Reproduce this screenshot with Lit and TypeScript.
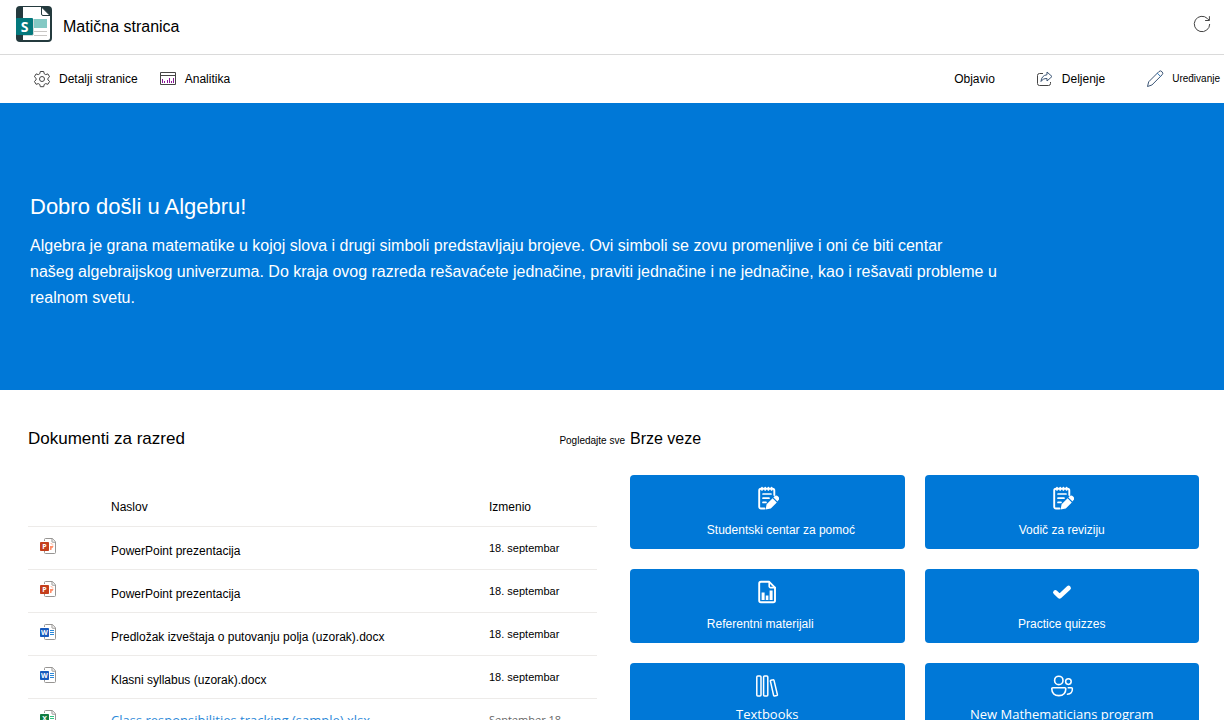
import { LitElement, html, css, svg } from "lit";
import { customElement } from "lit/decorators.js";
import { classMap } from "lit/directives/class-map.js";

type DocKind = "ppt" | "doc" | "xls";

interface ClassDocument {
  kind: DocKind;
  title: string;
  modified: string;
  link?: boolean;
}

interface QuickLink {
  icon: string;
  label: string;
  start?: boolean;
  humanist?: boolean;
}

const documents: ClassDocument[] = [
  { kind: "ppt", title: "PowerPoint prezentacija", modified: "18. septembar" },
  { kind: "ppt", title: "PowerPoint prezentacija", modified: "18. septembar" },
  { kind: "doc", title: "Predložak izveštaja o putovanju polja (uzorak).docx", modified: "18. septembar" },
  { kind: "doc", title: "Klasni syllabus (uzorak).docx", modified: "18. septembar" },
  { kind: "xls", title: "Class responsibilities tracking (sample).xlsx", modified: "September 18", link: true },
];

const quickLinks: QuickLink[] = [
  { icon: "note", label: "Studentski centar za pomoć", start: true },
  { icon: "note", label: "Vodič za reviziju" },
  { icon: "report", label: "Referentni materijali", start: true },
  { icon: "check", label: "Practice quizzes" },
  { icon: "books", label: "Textbooks", humanist: true },
  { icon: "people", label: "New Mathematicians program", humanist: true },
];

const tileShapes: Record<string, unknown> = {
  note: svg`
    <path d="M9.500 22.500H6a1.800 1.800 0 0 1-1.800-1.800V4.600A1.800 1.800 0 0 1 6 2.800h11.500a1.800 1.800 0 0 1 1.800 1.800V9" stroke-width="1.900"/>
    <path d="M7 1.500v2.500M10.200 1.500v2.500M13.400 1.500v2.500M16.600 1.500v2.500" stroke-width="1.700"/>
    <path d="M8 8h8M8 12.200h6M8 16.400h3" stroke-width="1.700"/>
    <path class="solid" d="M10.600 23.400l1-5.200 6-6 4.200 4.200-6 6zM18.400 11.400l.8-.8a2.600 2.600 0 0 1 3.900 0 2.600 2.600 0 0 1 0 3.900l-.6.900z"/>`,
  report: svg`
    <path d="M14.200 1.800H6A1.800 1.800 0 0 0 4.200 3.600v16.800A1.800 1.800 0 0 0 6 22.200h12.200a1.800 1.800 0 0 0 1.800-1.800V7.600z" stroke-width="1.900"/>
    <path d="M14.200 2v4.300a1.300 1.300 0 0 0 1.300 1.300H20" stroke-width="1.600"/>
    <path class="solid" d="M6.600 12.500h3V20h-3zM10.800 15.500h2.600V20h-2.600zM14.600 10.500h3V20h-3z"/>`,
  check: svg`<path d="M5.400 12.400l4.200 4L18.600 8" stroke-width="4.600"/>`,
  books: svg`
    <rect x="1.800" y="2" width="4.200" height="20" rx="1" stroke-width="1.500"/>
    <rect x="8.600" y="2" width="4.200" height="20" rx="1" stroke-width="1.500"/>
    <path d="M16 6.200l2-.4a.8.800 0 0 1 1 .6l3.400 14.200a.8.800 0 0 1-.6 1l-2.200.4a.8.800 0 0 1-1-.6L15.400 7.200a.8.800 0 0 1 .6-1z" stroke-width="1.500"/>`,
  people: svg`
    <circle cx="8.800" cy="6.400" r="4.200" stroke-width="1.600"/>
    <circle cx="18.400" cy="7.600" r="2.800" stroke-width="1.500"/>
    <path d="M2.800 13.800h12a1 1 0 0 1 1 1c0 4.600-2.800 6.800-7 6.800s-7-2.200-7-6.800a1 1 0 0 1 1-1z" stroke-width="1.600"/>
    <path d="M18.200 13.800h3.200a1 1 0 0 1 1 1c0 3.600-1.800 5.400-5 5.400" stroke-width="1.500"/>`,
};

const docColors: Record<DocKind, { badge: string; accent: string; letter: string }> = {
  ppt: { badge: "#c43e1c", accent: "#ff8f6b", letter: "P" },
  doc: { badge: "#185abd", accent: "#2b88d8", letter: "W" },
  xls: { badge: "#107c41", accent: "#33c481", letter: "X" },
};

const docIcon = (kind: DocKind) => {
  const c = docColors[kind];
  return html`<svg class="doc-icon" viewBox="0 0 16 16" aria-hidden="true">
    <path d="M4.500 3V1.500a1 1 0 0 1 1-1h6.800l3.200 3.200v10.800a1 1 0 0 1-1 1h-9a1 1 0 0 1-1-1V13" fill="#fff" stroke="#979593"/>
    <path d="M12 .5v3.200a.5.500 0 0 0 .5.500h3" fill="none" stroke="#979593"/>
    ${kind === "ppt"
      ? svg`<path d="M10 8h3.500a3 3 0 0 1-2 2.500V12H10z" fill="${c.accent}"/><path d="M10.500 5.500h1.500V7h1.500" fill="none" stroke="#ffc7b5"/>`
      : svg`<path d="M10 6.500h4M10 8.500h4M10 10.500h4" fill="none" stroke="${c.accent}"/>`}
    <rect y="4" width="9" height="9" rx=".8" fill="${c.badge}"/>
    <text x="4.500" y="11" text-anchor="middle" font-size="7" font-weight="700" fill="#fff">${c.letter}</text>
  </svg>`;
};

@customElement("app-root")
export class AppRoot extends LitElement {
  static styles = css`
    :host {
      display: block;
      height: 100vh;
      overflow: hidden auto;
      scrollbar-width: none;
      background: #fff;
      color: #000;
      font: 12px/16px "Liberation Sans", Arial, sans-serif;
    }
    *, *::before, *::after { box-sizing: border-box; }
    h1, h2, p { margin: 0; font-weight: 400; }
    a { color: inherit; text-decoration: none; }
    button {
      display: flex;
      align-items: center;
      gap: 8px;
      padding: 0;
      border: 0;
      background: none;
      color: inherit;
      font: inherit;
      cursor: pointer;
    }
    svg { display: block; flex: none; }
    .top {
      display: flex;
      align-items: center;
      justify-content: space-between;
      padding: 6px 13px 12px 16px;
      border-bottom: 1px solid #dadada;
    }
    .brand { display: flex; align-items: center; gap: 11px; }
    .brand h1 { font-size: 16px; line-height: 20px; padding-top: 6px; }
    .logo { width: 36px; height: 36px; }
    .logo text { font: 700 14px "Open Sans", sans-serif; }
    .icon { width: 18px; height: 18px; fill: none; stroke: #444; }
    .commands {
      display: flex;
      align-items: center;
      justify-content: space-between;
      height: 48px;
      padding: 0 4px 0 33px;
    }
    .group { display: flex; align-items: center; gap: 21px; }
    .group.end { gap: 41px; }
    .small { font-size: 10px; }
    .hero {
      padding: 90px 30px 79px;
      background: #0078d7;
      color: #fff;
    }
    .hero h2 { font-size: 22px; line-height: 28px; }
    .hero p { margin-top: 12px; font-size: 16px; line-height: 26px; max-width: 1000px; }
    .content {
      display: grid;
      grid-template-columns: 602fr 569fr;
      padding: 37px 25px 20px 28px;
    }
    .section-head {
      display: flex;
      align-items: center;
      justify-content: space-between;
      height: 24px;
      padding-right: 5px;
    }
    .section-head h2 { font-size: 17px; }
    .section-head a { padding-top: 4px; }
    .links .section-head h2 { font-size: 16px; }
    .table-box { padding: 35px 33px 0 0; }
    table { width: 100%; border-collapse: collapse; table-layout: fixed; }
    th, td { padding: 0; text-align: left; font-weight: 400; border-bottom: 1px solid #edebe9; }
    th { height: 40px; padding-top: 2px; }
    td { height: 43px; }
    .col-icon { width: 83px; }
    .col-date { width: 108px; }
    .name { padding-top: 6px; }
    .date { font-size: 11px; }
    .foreign { font-family: "Open Sans", "Noto Sans", sans-serif; }
    .name.foreign { padding-top: 0; color: #2b88d8; font-size: 13px; }
    .date.foreign { color: #666; }
    .doc-icon { width: 16px; height: 16px; margin: 0 0 3px 12px; }
    .doc-icon text { font-family: "Open Sans", sans-serif; }
    .tiles {
      display: grid;
      grid-template-columns: 1fr 1fr;
      gap: 20px;
      padding-top: 24px;
    }
    .tile {
      display: flex;
      flex-direction: column;
      align-items: center;
      gap: 12px;
      height: 74px;
      padding-top: 11px;
      border-radius: 4px;
      background: #0078d7;
      color: #fff;
    }
    .tile svg {
      width: 24px;
      height: 24px;
      fill: none;
      stroke: #fff;
      stroke-linecap: round;
      stroke-linejoin: round;
    }
    .tile .solid { fill: #fff; stroke: none; }
    .tile.start span { align-self: flex-start; padding-left: 28%; }
    .tile.humanist { gap: 8px; font-family: "Open Sans", "Noto Sans", sans-serif; font-size: 13px; }
  `;

  render() {
    return html`
      <header class="top">
        <div class="brand">
          <svg class="logo" viewBox="0 0 36 36" aria-hidden="true">
            <rect width="36" height="36" rx="4" fill="#243a3e"/>
            <path d="M7 1h18l9 9v22a2 2 0 0 1-2 2H7z" fill="#fff"/>
            <path d="M25.500 1v7a1.500 1.500 0 0 0 1.500 1.500h7z" fill="#fff" stroke="#243a3e"/>
            <path d="M17 13h14v9H17z" fill="#83c9c4"/>
            <path d="M18 25.500h13M18 29.500h13" stroke="#c8c6c4"/>
            <path d="M7 29h11V13h-1v17H7z" fill="#cfd8d8"/>
            <rect y="12" width="17" height="17" rx="1" fill="#03787c"/>
            <text x="8.500" y="25.500" text-anchor="middle" fill="#fff">S</text>
          </svg>
          <h1>Matična stranica</h1>
        </div>
        <button aria-label="Osveži">
          <svg class="icon" viewBox="0 0 18 18"><path d="M16.700 9A7.700 7.700 0 1 1 14.500 3.600L16.200 5.300M16.400 1.200v4.300h-4.300"/></svg>
        </button>
      </header>

      <nav class="commands">
        <div class="group">
          <button>
            <svg class="icon" viewBox="0 0 18 18">
              <path d="M7.300 1.500h3.400l.5 2.200 1.500.9 2.200-.7 1.700 2.900-1.700 1.500v1.600l1.700 1.500-1.700 2.900-2.200-.7-1.500.9-.5 2.200H7.300l-.5-2.200-1.500-.9-2.200.7-1.700-2.900 1.700-1.500V8.300L1.400 6.800l1.700-2.900 2.200.7 1.500-.9z" stroke-linejoin="round"/>
              <circle cx="9" cy="9" r="2.500"/>
            </svg>
            Detalji stranice
          </button>
          <button>
            <svg class="icon" viewBox="0 0 18 18">
              <path d="M1.500 2.500h15v12h-15zM1.500 5.500h15"/>
              <path d="M3.500 13V9M5.500 13v-2M8.500 13v-3M10.500 13V8M12.500 13v-2M14.500 13V8" stroke="#881798"/>
            </svg>
            Analitika
          </button>
        </div>
        <div class="group end">
          <button>Objavio</button>
          <button>
            <svg class="icon" viewBox="0 0 18 18">
              <path d="M7 3.500H3.500a2 2 0 0 0-2 2v8a2 2 0 0 0 2 2h9a2 2 0 0 0 2-2V12"/>
              <path d="M11 2l5 4.500-5 4.500V8.500c-3 0-4.500.8-6 3 .3-3.800 2.200-6.300 6-6.800z" stroke="#3b5575" stroke-linejoin="round"/>
            </svg>
            Deljenje
          </button>
          <button class="small">
            <svg class="icon" viewBox="0 0 18 18">
              <path d="M1.500 16.500l1.200-4.700L12.800 1.700a2.200 2.200 0 0 1 3.200 0 2.200 2.200 0 0 1 0 3.200L5.900 15z" stroke="#3b5575" stroke-linejoin="round"/>
              <path d="M11.300 3.200l3.300 3.300" stroke="#2b78c0"/>
            </svg>
            Uređivanje
          </button>
        </div>
      </nav>

      <section class="hero">
        <h2>Dobro došli u Algebru!</h2>
        <p>
          Algebra je grana matematike u kojoj slova i drugi simboli predstavljaju brojeve. Ovi simboli se zovu promenljive i oni će biti centar<br />
          našeg algebraijskog univerzuma. Do kraja ovog razreda rešavaćete jednačine, praviti jednačine i ne jednačine, kao i rešavati probleme u
          realnom svetu.
        </p>
      </section>

      <main class="content">
        <section>
          <div class="section-head">
            <h2>Dokumenti za razred</h2>
            <a class="small" href="#dokumenti">Pogledajte sve</a>
          </div>
          <div class="table-box">
            <table>
              <colgroup><col class="col-icon" /><col /><col class="col-date" /></colgroup>
              <thead>
                <tr><th></th><th scope="col">Naslov</th><th scope="col">Izmenio</th></tr>
              </thead>
              <tbody>
                ${documents.map((d) => html`
                  <tr>
                    <td>${docIcon(d.kind)}</td>
                    <td class=${classMap({ name: true, foreign: !!d.link })}><a href="#dokument">${d.title}</a></td>
                    <td class=${classMap({ date: true, foreign: !!d.link })}>${d.modified}</td>
                  </tr>`)}
              </tbody>
            </table>
          </div>
        </section>
        <section class="links">
          <div class="section-head"><h2>Brze veze</h2></div>
          <div class="tiles">
            ${quickLinks.map((q) => html`
              <a href="#veza" class=${classMap({ tile: true, start: !!q.start, humanist: !!q.humanist })}>
                <svg viewBox="0 0 24 24" aria-hidden="true">${tileShapes[q.icon]}</svg>
                <span>${q.label}</span>
              </a>`)}
          </div>
        </section>
      </main>
    `;
  }
}
